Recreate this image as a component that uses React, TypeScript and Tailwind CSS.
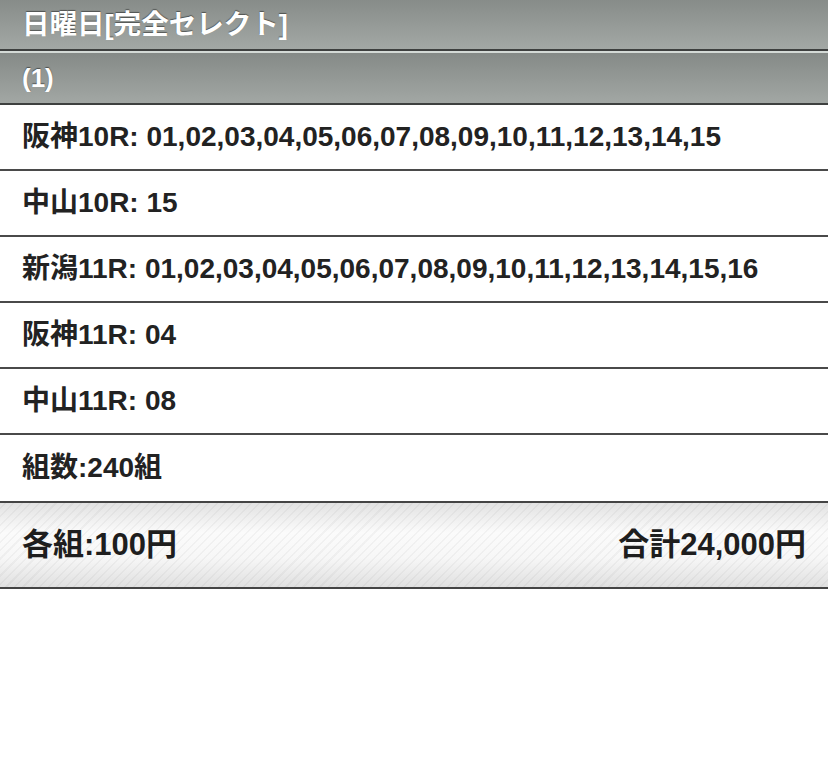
import React from "react";

const rows = [
  "阪神10R: 01,02,03,04,05,06,07,08,09,10,11,12,13,14,15",
  "中山10R: 15",
  "新潟11R: 01,02,03,04,05,06,07,08,09,10,11,12,13,14,15,16",
  "阪神11R: 04",
  "中山11R: 08",
];

const font = { fontFamily: '"Liberation Sans", "Noto Sans CJK JP", sans-serif' };

export default function App() {
  return (
    <div className="w-[828px] h-[777px] bg-white" style={font}>
      <div className="h-[49px] flex items-center px-[22px] bg-[linear-gradient(#878c89,#a3a8a5)] text-white font-bold text-[27.5px] [text-shadow:0_-1px_1px_rgba(0,0,0,0.45)]">
        日曜日[完全セレクト]
      </div>
      <div className="h-[2px] bg-[#3e403f]" />
      <div className="h-[2px] bg-[#d4dad6]" />
      <div className="h-[50px] flex items-center px-[22px] bg-[linear-gradient(#858a87,#a2a7a4)] text-white font-bold text-[26px] [text-shadow:0_-1px_1px_rgba(0,0,0,0.45)]">
        (1)
      </div>
      <div className="h-[2px] bg-[#3e403f]" />
      {rows.map((r, i) => (
        <div
          key={i}
          className="h-[66px] flex items-center px-[22px] border-b-2 border-[#4a4a4a] text-[#222] font-bold text-[28px]"
        >
          {r}
        </div>
      ))}
      <div className="h-[68px] flex items-center px-[22px] border-b-2 border-[#444] text-[#222] font-bold text-[28px]">
        組数:240組
      </div>
      <div className="h-[86px] flex items-center justify-between px-[22px] border-b-2 border-[#444] text-[#1e1e1e] font-bold text-[31px] [background-image:repeating-linear-gradient(-45deg,transparent_0px,transparent_4.5px,rgba(0,0,0,0.035)_4.5px,rgba(0,0,0,0.035)_6px),linear-gradient(#e2e2e2,#fbfbfb_35%,#f7f7f7_65%,#e0e0e0)]">
        <span>各組:100円</span>
        <span>合計24,000円</span>
      </div>
    </div>
  );
}
